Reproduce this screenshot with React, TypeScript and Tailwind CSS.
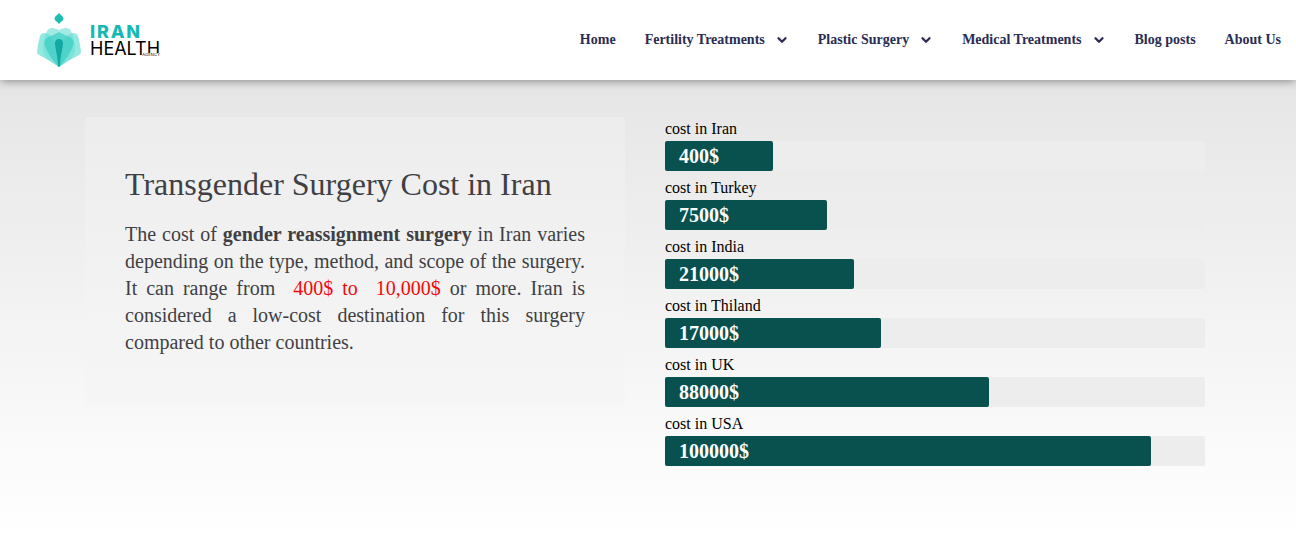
import { ChevronDown } from "lucide-react";

const SERIF = "font-['Liberation_Serif','Times_New_Roman',serif]";

const links = [
  { label: "Home", menu: false },
  { label: "Fertility Treatments", menu: true },
  { label: "Plastic Surgery", menu: true },
  { label: "Medical Treatments", menu: true },
  { label: "Blog posts", menu: false },
  { label: "About Us", menu: false },
];

const costs = [
  { country: "Iran", value: "400$", share: 20 },
  { country: "Turkey", value: "7500$", share: 30 },
  { country: "India", value: "21000$", share: 35 },
  { country: "Thiland", value: "17000$", share: 40 },
  { country: "UK", value: "88000$", share: 60 },
  { country: "USA", value: "100000$", share: 90 },
];

function Logo() {
  return (
    <a href="#" className="flex items-center gap-2 text-black">
      <svg width="46" height="56" viewBox="0 0 46 56" aria-hidden="true">
        <path d="M23 1C24.500 3 27.500 4.500 27.500 6.500S24.500 10 23 12C21.500 10 18.500 8.500 18.500 6.500S21.500 3 23 1Z" fill="#1fbcb4" />
        <path d="M4 24Q5 21 9 21Q15 22 18 28Q23 36 23 55Q13 48 3 43Q1 42 1 39Q2 31 4 24Z" fill="#6fe0d6" opacity=".75" />
        <path d="M42 24Q41 21 37 21Q31 22 28 28Q23 36 23 55Q33 48 43 43Q45 42 45 39Q44 31 42 24Z" fill="#6fe0d6" opacity=".75" />
        <path d="M11 19Q13 15.500 17 16Q20 16.500 23 18Q26 16.500 29 16Q33 15.500 35 19Q39 27 39 36Q39 42 35 47L23 55L11 47Q7 42 7 36Q7 27 11 19Z" fill="#6fe0d6" opacity=".65" />
        <path d="M23 20Q28 23 34 25Q39 28 37 34Q33 45 23 55Q13 45 9 34Q7 28 12 25Q18 23 23 20Z" fill="#35cbc1" opacity=".65" />
        <path d="M23 27C26 27 27 29 27 31C27 36 24.500 42 24 54L23 55L22 54C21.500 42 19 36 19 31C19 29 20 27 23 27Z" fill="#12a9a2" />
      </svg>
      <span className="relative flex flex-col font-[Inter,sans-serif] text-lg leading-[17px]">
        <span className="font-extrabold tracking-widest text-[#16b9b2]">IRAN</span>
        <span>HEALTH</span>
        <span className="absolute right-0 bottom-0 bg-white text-[4px] leading-[4px] tracking-wider">AGENCY</span>
      </span>
    </a>
  );
}

export default function App() {
  return (
    <div className={`min-h-screen bg-white ${SERIF}`}>
      <header className="relative flex h-20 items-center justify-between bg-white pr-[15px] pl-9 shadow-[0_0_10px_rgba(0,0,0,0.5)]">
        <Logo />
        <nav aria-label="Main" className="flex items-center gap-[29px] text-sm font-bold text-[#2a2c52]">
          {links.map((link) => (
            <a key={link.label} href="#" className="flex items-center gap-2.5 whitespace-nowrap">
              {link.label}
              {link.menu && <ChevronDown size={14} strokeWidth={4} aria-hidden="true" />}
            </a>
          ))}
        </nav>
      </header>

      <main className="bg-linear-to-b from-[#e6e6e6] to-white pt-[37px] pr-1.5 pb-[71px]">
        <div className="mx-auto grid max-w-[1120px] grid-cols-2 items-start gap-10">
          <section className="rounded-sm bg-linear-to-b from-[#ededed] to-[#f6f6f6] px-10 pt-12 pb-[51px] text-[#3f3f44]">
            <h1 className="mb-[18px] text-[32px] leading-[38px]">Transgender Surgery Cost in Iran</h1>
            <p className="text-justify text-xl leading-[27px]">
              The cost of <strong>gender reassignment surgery</strong> in Iran varies depending on the type,
              method, and scope of the surgery. It can range from{" "}
              <span className="text-[#f80808]">&nbsp;400$ to &nbsp;10,000$</span> or more. Iran is considered a
              low-cost destination for this surgery compared to other countries.
            </p>
          </section>

          <section aria-label="Cost by country" className="flex flex-col gap-[5px]">
            {costs.map((cost) => (
              <div key={cost.country}>
                <div className="leading-6 text-black">cost in {cost.country}</div>
                <div className="rounded-xs bg-[#ededed]">
                  <div
                    className="rounded-xs bg-[#09514f] px-3.5 text-xl leading-[30px] font-bold text-white"
                    style={{ width: `${cost.share}%` }}
                  >
                    {cost.value}
                  </div>
                </div>
              </div>
            ))}
          </section>
        </div>
      </main>
    </div>
  );
}
